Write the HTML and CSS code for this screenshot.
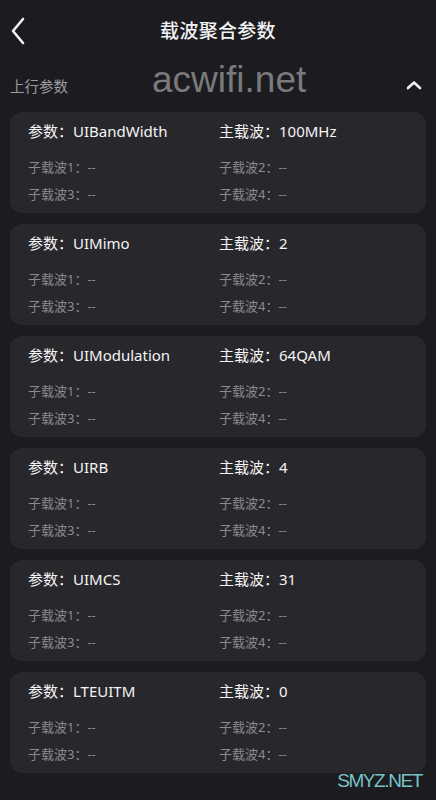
FILE: index.html
```html
<!DOCTYPE html>
<html lang="zh-Hans">
<head>
  <meta charset="UTF-8" />
  <meta name="viewport" content="width=device-width, initial-scale=1" />
  <title>载波聚合参数</title>
  <link rel="stylesheet" href="styles.css">
</head>
<body>
  <header class="topbar">
    <svg class="back" width="14" height="28" viewBox="0 0 14 28">
      <polyline points="12,2 2,14 12,26" fill="none" stroke="#f2f2f2" stroke-width="2.6" stroke-linecap="round" stroke-linejoin="round"/>
    </svg>
    <h1>载波聚合参数</h1>
  </header>

  <div class="section">
    <span>上行参数</span>
    <svg class="chevron" width="16" height="10" viewBox="0 0 16 10">
      <polyline points="2,8 8,2.5 14,8" fill="none" stroke="#f2f2f2" stroke-width="2.6" stroke-linecap="round" stroke-linejoin="round"/>
    </svg>
  </div>

  <div class="cards">
    <div class="card">
      <div class="title">参数：UIBandWidth</div>
      <div class="title">主载波：100MHz</div>
      <div class="sub">子载波1：--</div>
      <div class="sub">子载波2：--</div>
      <div class="sub">子载波3：--</div>
      <div class="sub">子载波4：--</div>
    </div>
    <div class="card">
      <div class="title">参数：UIMimo</div>
      <div class="title">主载波：2</div>
      <div class="sub">子载波1：--</div>
      <div class="sub">子载波2：--</div>
      <div class="sub">子载波3：--</div>
      <div class="sub">子载波4：--</div>
    </div>
    <div class="card">
      <div class="title">参数：UIModulation</div>
      <div class="title">主载波：64QAM</div>
      <div class="sub">子载波1：--</div>
      <div class="sub">子载波2：--</div>
      <div class="sub">子载波3：--</div>
      <div class="sub">子载波4：--</div>
    </div>
    <div class="card">
      <div class="title">参数：UIRB</div>
      <div class="title">主载波：4</div>
      <div class="sub">子载波1：--</div>
      <div class="sub">子载波2：--</div>
      <div class="sub">子载波3：--</div>
      <div class="sub">子载波4：--</div>
    </div>
    <div class="card">
      <div class="title">参数：UIMCS</div>
      <div class="title">主载波：31</div>
      <div class="sub">子载波1：--</div>
      <div class="sub">子载波2：--</div>
      <div class="sub">子载波3：--</div>
      <div class="sub">子载波4：--</div>
    </div>
    <div class="card">
      <div class="title">参数：LTEUITM</div>
      <div class="title">主载波：0</div>
      <div class="sub">子载波1：--</div>
      <div class="sub">子载波2：--</div>
      <div class="sub">子载波3：--</div>
      <div class="sub">子载波4：--</div>
    </div>
  </div>

  <!-- 水印 -->
  <div class="mark-top">acwifi.net</div>
  <div class="mark-bottom">SMYZ.NET</div>
</body>
</html>
```

FILE: styles.css
```css
* { box-sizing: border-box; margin: 0; padding: 0; }

body {
  font-family: 'Noto Sans', 'Noto Sans CJK SC', sans-serif;
  background: #1c1b20;
  color: #f2f2f2;
  width: 436px;
  min-height: 800px;
  position: relative;
  overflow: hidden;
}

.topbar {
  height: 60px;
  display: flex;
  align-items: center;
  justify-content: center;
  position: relative;
}

.topbar h1 {
  font-size: 19px;
  font-weight: 500;
  color: #f2f2f2;
  letter-spacing: 0.3px;
}

.back {
  position: absolute;
  left: 11px;
  top: 17px;
}

.section {
  height: 50px;
  display: flex;
  align-items: center;
  justify-content: space-between;
  padding: 0 14px 0 10px;
}

.section span {
  font-size: 14.5px;
  color: #9c9ca0;
}

.chevron { margin-bottom: 1px; }

.cards {
  display: flex;
  flex-direction: column;
  gap: 11px;
  padding: 2px 10px 0;
}

.card {
  height: 101px;
  background: #28272c;
  border-radius: 12px;
  padding: 9px 18px 10px;
  display: grid;
  grid-template-columns: 191px 1fr;
  grid-template-rows: 28px 18px 18px;
  row-gap: 9px;
}

.card .title {
  font-size: 15px;
  line-height: 20px;
  font-weight: 400;
  color: #f4f4f4;
}

.card .sub {
  font-size: 13px;
  line-height: 18px;
  color: #8a8a8f;
}

.mark-top {
  position: absolute;
  left: 152px;
  top: 59px;
  font-family: 'Liberation Sans', sans-serif;
  font-size: 37px;
  color: #7a7a7c;
}

.mark-bottom {
  position: absolute;
  right: 14px;
  top: 770px;
  font-family: 'Liberation Sans', sans-serif;
  font-size: 19px;
  letter-spacing: -1.4px;
  color: #78c3c8;
}
```
